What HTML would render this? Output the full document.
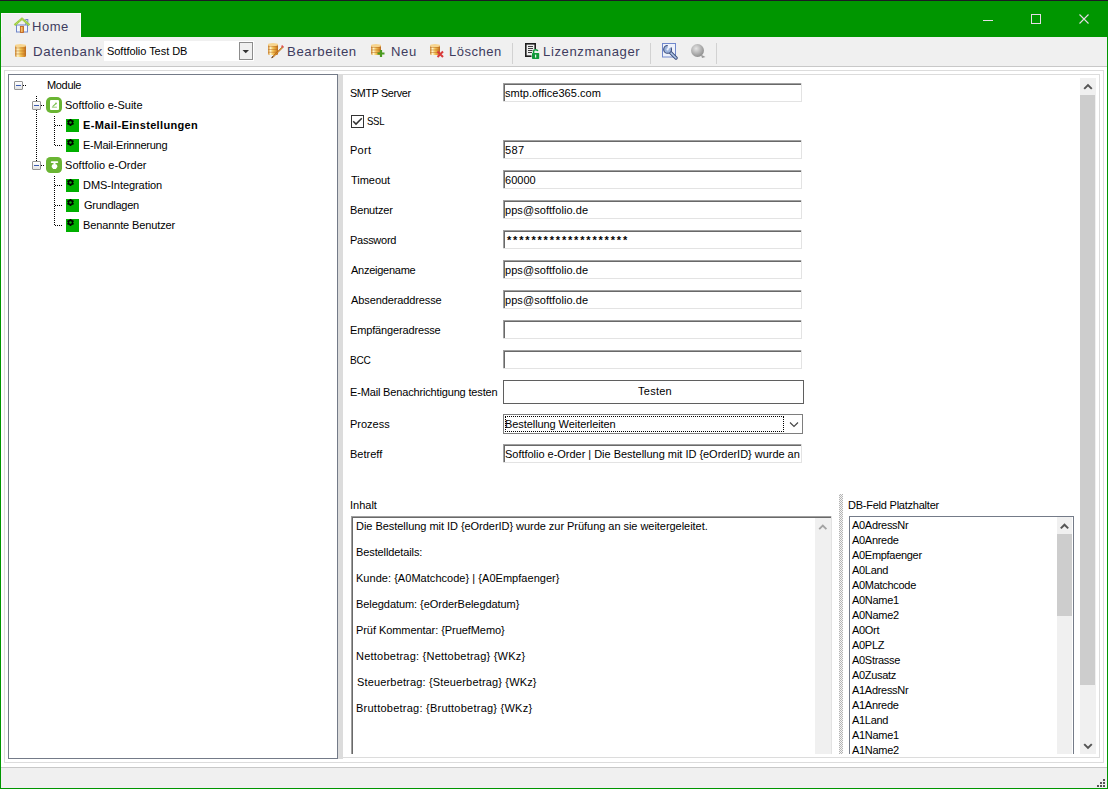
<!DOCTYPE html>
<html><head><meta charset="utf-8"><style>
html,body{margin:0;padding:0;width:1108px;height:789px;overflow:hidden;background:#fff}
body{position:relative;font-family:"Liberation Sans",sans-serif}
div,span,svg{position:absolute;display:block}
span{white-space:pre}
</style></head><body>
<div style="left:0px;top:0px;width:1108px;height:789px;background:#ffffff"></div>
<div style="left:0px;top:0px;width:1108px;height:37px;background:#009600"></div>
<div style="left:0px;top:0px;width:1108px;height:1px;background:#1d1b24"></div>
<div style="left:0px;top:37px;width:1px;height:752px;background:#009600"></div>
<div style="left:1107px;top:37px;width:1px;height:752px;background:#009600"></div>
<div style="left:0px;top:788px;width:1108px;height:1px;background:#009600"></div>
<div style="left:1px;top:13px;width:80px;height:24px;background:#f0f0f0;box-shadow:inset 1px 1px 0 #fbf7fb, inset -1px 0 0 #fbf7fb"></div>
<div style="left:983px;top:20px;width:10px;height:1px;background:#e6dce6"></div>
<div style="left:1031px;top:14px;width:10px;height:10px;box-sizing:border-box;border:1px solid #e6dce6"></div>
<svg style="left:1079px;top:14px" width="10" height="10" viewBox="0 0 10 10"><path d="M0.5,0.5 L9.5,9.5 M9.5,0.5 L0.5,9.5" stroke="#e6dce6" stroke-width="1.1"/></svg>
<div style="left:1px;top:37px;width:1106px;height:29px;background:#f0f0f0"></div>
<div style="left:1px;top:66px;width:1106px;height:1px;background:#c8c8c8"></div>
<div style="left:1px;top:767px;width:1106px;height:1px;background:#c8c8c8"></div>
<div style="left:1px;top:768px;width:1106px;height:20px;background:#f0f0f0"></div>
<div style="left:4px;top:70px;width:1100px;height:1px;background:#dcdcdc"></div>
<div style="left:4px;top:762px;width:1100px;height:1px;background:#dcdcdc"></div>
<div style="left:4px;top:70px;width:1px;height:693px;background:#dcdcdc"></div>
<div style="left:1103px;top:70px;width:1px;height:693px;background:#dcdcdc"></div>
<div style="left:8px;top:74px;width:330px;height:1px;background:#747b88"></div>
<div style="left:8px;top:758px;width:330px;height:1px;background:#747b88"></div>
<div style="left:8px;top:74px;width:1px;height:685px;background:#747b88"></div>
<div style="left:337px;top:74px;width:1px;height:685px;background:#747b88"></div>
<div style="left:338px;top:74px;width:5px;height:685px;background:#dcdcdc"></div>
<div style="left:343px;top:74px;width:757px;height:1px;background:#dcdcdc"></div>
<div style="left:343px;top:757px;width:757px;height:1px;background:#dcdcdc"></div>
<div style="left:1099px;top:74px;width:1px;height:684px;background:#dcdcdc"></div>
<div style="left:104px;top:41px;width:150px;height:20px;background:#ffffff"></div>
<div style="left:239px;top:42px;width:14px;height:18px;box-sizing:border-box;border:1px solid #8c8c8c;background:#f0f0f0"></div>
<svg style="left:242px;top:49px" width="8" height="5" viewBox="0 0 8 5"><path d="M0.5,1 L7,1 L3.75,4.2 Z" fill="#333"/></svg>
<div style="left:512px;top:43px;width:1px;height:21px;background:#d2d2d2"></div>
<div style="left:650px;top:43px;width:1px;height:21px;background:#d2d2d2"></div>
<div style="left:716px;top:43px;width:1px;height:21px;background:#d2d2d2"></div>
<div style="left:14px;top:81px;width:9px;height:9px;box-sizing:border-box;border:1px solid #959595;border-radius:1px;background:linear-gradient(#ffffff,#e4e4e4)"></div>
<div style="left:16px;top:85px;width:5px;height:1px;background:#3c5cb4"></div>
<div style="left:23px;top:85px;width:1px;height:1px;background:#000"></div>
<div style="left:25px;top:85px;width:1px;height:1px;background:#000"></div>
<div style="left:36px;top:96px;width:1px;height:1px;background:#000"></div>
<div style="left:36px;top:98px;width:1px;height:1px;background:#000"></div>
<div style="left:36px;top:100px;width:1px;height:1px;background:#000"></div>
<div style="left:32px;top:101px;width:9px;height:9px;box-sizing:border-box;border:1px solid #959595;border-radius:1px;background:linear-gradient(#ffffff,#e4e4e4)"></div>
<div style="left:34px;top:105px;width:5px;height:1px;background:#3c5cb4"></div>
<div style="left:41px;top:105px;width:1px;height:1px;background:#000"></div>
<div style="left:43px;top:105px;width:1px;height:1px;background:#000"></div>
<div style="left:36px;top:110px;width:1px;height:1px;background:#000"></div>
<div style="left:36px;top:112px;width:1px;height:1px;background:#000"></div>
<div style="left:36px;top:114px;width:1px;height:1px;background:#000"></div>
<div style="left:36px;top:116px;width:1px;height:1px;background:#000"></div>
<div style="left:36px;top:118px;width:1px;height:1px;background:#000"></div>
<div style="left:36px;top:120px;width:1px;height:1px;background:#000"></div>
<div style="left:36px;top:122px;width:1px;height:1px;background:#000"></div>
<div style="left:36px;top:124px;width:1px;height:1px;background:#000"></div>
<div style="left:36px;top:126px;width:1px;height:1px;background:#000"></div>
<div style="left:36px;top:128px;width:1px;height:1px;background:#000"></div>
<div style="left:36px;top:130px;width:1px;height:1px;background:#000"></div>
<div style="left:36px;top:132px;width:1px;height:1px;background:#000"></div>
<div style="left:36px;top:134px;width:1px;height:1px;background:#000"></div>
<div style="left:36px;top:136px;width:1px;height:1px;background:#000"></div>
<div style="left:36px;top:138px;width:1px;height:1px;background:#000"></div>
<div style="left:36px;top:140px;width:1px;height:1px;background:#000"></div>
<div style="left:36px;top:142px;width:1px;height:1px;background:#000"></div>
<div style="left:36px;top:144px;width:1px;height:1px;background:#000"></div>
<div style="left:36px;top:146px;width:1px;height:1px;background:#000"></div>
<div style="left:36px;top:148px;width:1px;height:1px;background:#000"></div>
<div style="left:36px;top:150px;width:1px;height:1px;background:#000"></div>
<div style="left:36px;top:152px;width:1px;height:1px;background:#000"></div>
<div style="left:36px;top:154px;width:1px;height:1px;background:#000"></div>
<div style="left:36px;top:156px;width:1px;height:1px;background:#000"></div>
<div style="left:36px;top:158px;width:1px;height:1px;background:#000"></div>
<div style="left:36px;top:160px;width:1px;height:1px;background:#000"></div>
<div style="left:32px;top:161px;width:9px;height:9px;box-sizing:border-box;border:1px solid #959595;border-radius:1px;background:linear-gradient(#ffffff,#e4e4e4)"></div>
<div style="left:34px;top:165px;width:5px;height:1px;background:#3c5cb4"></div>
<div style="left:41px;top:165px;width:1px;height:1px;background:#000"></div>
<div style="left:43px;top:165px;width:1px;height:1px;background:#000"></div>
<svg style="left:46px;top:97px" width="16" height="16" viewBox="0 0 16 16"><rect x="0" y="0" width="16" height="16" rx="5" fill="#6ab533"/><rect x="4" y="3" width="9" height="10" rx="1" fill="#fff"/><rect x="5.9" y="9.6" width="5" height="1.3" fill="#b0da94"/><path d="M6.6,9.6 L9.8,6.6" stroke="#7cc050" stroke-width="1.1"/><circle cx="10" cy="6.4" r="0.9" fill="#7cc050"/></svg>
<svg style="left:46px;top:157px" width="16" height="16" viewBox="0 0 16 16"><rect x="0" y="0" width="16" height="16" rx="4.5" fill="#6ab533"/><rect x="4.8" y="4.3" width="7.4" height="1.7" rx="0.8" fill="#fff"/><rect x="7.5" y="5.5" width="2" height="2" fill="#fff"/><ellipse cx="8.5" cy="9.2" rx="2.8" ry="2.3" fill="#fff"/><rect x="6.9" y="9.5" width="3.2" height="2.5" fill="#fff"/></svg>
<div style="left:54px;top:116px;width:1px;height:1px;background:#000"></div>
<div style="left:54px;top:118px;width:1px;height:1px;background:#000"></div>
<div style="left:54px;top:120px;width:1px;height:1px;background:#000"></div>
<div style="left:54px;top:122px;width:1px;height:1px;background:#000"></div>
<div style="left:54px;top:124px;width:1px;height:1px;background:#000"></div>
<div style="left:54px;top:126px;width:1px;height:1px;background:#000"></div>
<div style="left:54px;top:128px;width:1px;height:1px;background:#000"></div>
<div style="left:54px;top:130px;width:1px;height:1px;background:#000"></div>
<div style="left:54px;top:132px;width:1px;height:1px;background:#000"></div>
<div style="left:54px;top:134px;width:1px;height:1px;background:#000"></div>
<div style="left:54px;top:136px;width:1px;height:1px;background:#000"></div>
<div style="left:54px;top:138px;width:1px;height:1px;background:#000"></div>
<div style="left:54px;top:140px;width:1px;height:1px;background:#000"></div>
<div style="left:54px;top:142px;width:1px;height:1px;background:#000"></div>
<div style="left:54px;top:144px;width:1px;height:1px;background:#000"></div>
<div style="left:55px;top:125px;width:1px;height:1px;background:#000"></div>
<div style="left:57px;top:125px;width:1px;height:1px;background:#000"></div>
<div style="left:59px;top:125px;width:1px;height:1px;background:#000"></div>
<div style="left:61px;top:125px;width:1px;height:1px;background:#000"></div>
<svg style="left:66px;top:119px" width="13" height="13" viewBox="0 0 13 13"><rect width="13" height="13" fill="#00b000"/><g transform="translate(4.5,3.5)" fill="#000"><circle r="2.7"/><rect x="-0.9" y="-3.5" width="1.8" height="7"/><rect x="-0.9" y="-3.5" width="1.8" height="7" transform="rotate(60)"/><rect x="-0.9" y="-3.5" width="1.8" height="7" transform="rotate(120)"/><circle r="1.2" fill="#00b000"/></g></svg>
<div style="left:55px;top:145px;width:1px;height:1px;background:#000"></div>
<div style="left:57px;top:145px;width:1px;height:1px;background:#000"></div>
<div style="left:59px;top:145px;width:1px;height:1px;background:#000"></div>
<div style="left:61px;top:145px;width:1px;height:1px;background:#000"></div>
<svg style="left:66px;top:139px" width="13" height="13" viewBox="0 0 13 13"><rect width="13" height="13" fill="#00b000"/><g transform="translate(4.5,3.5)" fill="#000"><circle r="2.7"/><rect x="-0.9" y="-3.5" width="1.8" height="7"/><rect x="-0.9" y="-3.5" width="1.8" height="7" transform="rotate(60)"/><rect x="-0.9" y="-3.5" width="1.8" height="7" transform="rotate(120)"/><circle r="1.2" fill="#00b000"/></g></svg>
<div style="left:54px;top:176px;width:1px;height:1px;background:#000"></div>
<div style="left:54px;top:178px;width:1px;height:1px;background:#000"></div>
<div style="left:54px;top:180px;width:1px;height:1px;background:#000"></div>
<div style="left:54px;top:182px;width:1px;height:1px;background:#000"></div>
<div style="left:54px;top:184px;width:1px;height:1px;background:#000"></div>
<div style="left:54px;top:186px;width:1px;height:1px;background:#000"></div>
<div style="left:54px;top:188px;width:1px;height:1px;background:#000"></div>
<div style="left:54px;top:190px;width:1px;height:1px;background:#000"></div>
<div style="left:54px;top:192px;width:1px;height:1px;background:#000"></div>
<div style="left:54px;top:194px;width:1px;height:1px;background:#000"></div>
<div style="left:54px;top:196px;width:1px;height:1px;background:#000"></div>
<div style="left:54px;top:198px;width:1px;height:1px;background:#000"></div>
<div style="left:54px;top:200px;width:1px;height:1px;background:#000"></div>
<div style="left:54px;top:202px;width:1px;height:1px;background:#000"></div>
<div style="left:54px;top:204px;width:1px;height:1px;background:#000"></div>
<div style="left:54px;top:206px;width:1px;height:1px;background:#000"></div>
<div style="left:54px;top:208px;width:1px;height:1px;background:#000"></div>
<div style="left:54px;top:210px;width:1px;height:1px;background:#000"></div>
<div style="left:54px;top:212px;width:1px;height:1px;background:#000"></div>
<div style="left:54px;top:214px;width:1px;height:1px;background:#000"></div>
<div style="left:54px;top:216px;width:1px;height:1px;background:#000"></div>
<div style="left:54px;top:218px;width:1px;height:1px;background:#000"></div>
<div style="left:54px;top:220px;width:1px;height:1px;background:#000"></div>
<div style="left:54px;top:222px;width:1px;height:1px;background:#000"></div>
<div style="left:54px;top:224px;width:1px;height:1px;background:#000"></div>
<div style="left:55px;top:185px;width:1px;height:1px;background:#000"></div>
<div style="left:57px;top:185px;width:1px;height:1px;background:#000"></div>
<div style="left:59px;top:185px;width:1px;height:1px;background:#000"></div>
<div style="left:61px;top:185px;width:1px;height:1px;background:#000"></div>
<svg style="left:66px;top:179px" width="13" height="13" viewBox="0 0 13 13"><rect width="13" height="13" fill="#00b000"/><g transform="translate(4.5,3.5)" fill="#000"><circle r="2.7"/><rect x="-0.9" y="-3.5" width="1.8" height="7"/><rect x="-0.9" y="-3.5" width="1.8" height="7" transform="rotate(60)"/><rect x="-0.9" y="-3.5" width="1.8" height="7" transform="rotate(120)"/><circle r="1.2" fill="#00b000"/></g></svg>
<div style="left:55px;top:205px;width:1px;height:1px;background:#000"></div>
<div style="left:57px;top:205px;width:1px;height:1px;background:#000"></div>
<div style="left:59px;top:205px;width:1px;height:1px;background:#000"></div>
<div style="left:61px;top:205px;width:1px;height:1px;background:#000"></div>
<svg style="left:66px;top:199px" width="13" height="13" viewBox="0 0 13 13"><rect width="13" height="13" fill="#00b000"/><g transform="translate(4.5,3.5)" fill="#000"><circle r="2.7"/><rect x="-0.9" y="-3.5" width="1.8" height="7"/><rect x="-0.9" y="-3.5" width="1.8" height="7" transform="rotate(60)"/><rect x="-0.9" y="-3.5" width="1.8" height="7" transform="rotate(120)"/><circle r="1.2" fill="#00b000"/></g></svg>
<div style="left:55px;top:225px;width:1px;height:1px;background:#000"></div>
<div style="left:57px;top:225px;width:1px;height:1px;background:#000"></div>
<div style="left:59px;top:225px;width:1px;height:1px;background:#000"></div>
<div style="left:61px;top:225px;width:1px;height:1px;background:#000"></div>
<svg style="left:66px;top:219px" width="13" height="13" viewBox="0 0 13 13"><rect width="13" height="13" fill="#00b000"/><g transform="translate(4.5,3.5)" fill="#000"><circle r="2.7"/><rect x="-0.9" y="-3.5" width="1.8" height="7"/><rect x="-0.9" y="-3.5" width="1.8" height="7" transform="rotate(60)"/><rect x="-0.9" y="-3.5" width="1.8" height="7" transform="rotate(120)"/><circle r="1.2" fill="#00b000"/></g></svg>
<div style="left:503px;top:83px;width:299px;height:19px;background:#fff"></div>
<div style="left:503px;top:83px;width:299px;height:1px;background:#a0a0a0"></div>
<div style="left:503px;top:83px;width:1px;height:19px;background:#a0a0a0"></div>
<div style="left:504px;top:84px;width:297px;height:1px;background:#696969"></div>
<div style="left:504px;top:84px;width:1px;height:17px;background:#696969"></div>
<div style="left:503px;top:101px;width:299px;height:1px;background:#e3e3e3"></div>
<div style="left:801px;top:83px;width:1px;height:19px;background:#e3e3e3"></div>
<div style="left:351px;top:115px;width:13px;height:13px;box-sizing:border-box;border:1px solid #333;background:#fff"></div>
<svg style="left:351px;top:115px" width="13" height="13" viewBox="0 0 13 13"><path d="M2.2,6.3 L5,9.1 L10.8,3.3" stroke="#333" stroke-width="1.5" fill="none"/></svg>
<div style="left:503px;top:140px;width:299px;height:19px;background:#fff"></div>
<div style="left:503px;top:140px;width:299px;height:1px;background:#a0a0a0"></div>
<div style="left:503px;top:140px;width:1px;height:19px;background:#a0a0a0"></div>
<div style="left:504px;top:141px;width:297px;height:1px;background:#696969"></div>
<div style="left:504px;top:141px;width:1px;height:17px;background:#696969"></div>
<div style="left:503px;top:158px;width:299px;height:1px;background:#e3e3e3"></div>
<div style="left:801px;top:140px;width:1px;height:19px;background:#e3e3e3"></div>
<div style="left:503px;top:170px;width:299px;height:19px;background:#fff"></div>
<div style="left:503px;top:170px;width:299px;height:1px;background:#a0a0a0"></div>
<div style="left:503px;top:170px;width:1px;height:19px;background:#a0a0a0"></div>
<div style="left:504px;top:171px;width:297px;height:1px;background:#696969"></div>
<div style="left:504px;top:171px;width:1px;height:17px;background:#696969"></div>
<div style="left:503px;top:188px;width:299px;height:1px;background:#e3e3e3"></div>
<div style="left:801px;top:170px;width:1px;height:19px;background:#e3e3e3"></div>
<div style="left:503px;top:200px;width:299px;height:19px;background:#fff"></div>
<div style="left:503px;top:200px;width:299px;height:1px;background:#a0a0a0"></div>
<div style="left:503px;top:200px;width:1px;height:19px;background:#a0a0a0"></div>
<div style="left:504px;top:201px;width:297px;height:1px;background:#696969"></div>
<div style="left:504px;top:201px;width:1px;height:17px;background:#696969"></div>
<div style="left:503px;top:218px;width:299px;height:1px;background:#e3e3e3"></div>
<div style="left:801px;top:200px;width:1px;height:19px;background:#e3e3e3"></div>
<div style="left:503px;top:230px;width:299px;height:19px;background:#fff"></div>
<div style="left:503px;top:230px;width:299px;height:1px;background:#a0a0a0"></div>
<div style="left:503px;top:230px;width:1px;height:19px;background:#a0a0a0"></div>
<div style="left:504px;top:231px;width:297px;height:1px;background:#696969"></div>
<div style="left:504px;top:231px;width:1px;height:17px;background:#696969"></div>
<div style="left:503px;top:248px;width:299px;height:1px;background:#e3e3e3"></div>
<div style="left:801px;top:230px;width:1px;height:19px;background:#e3e3e3"></div>
<div style="left:503px;top:260px;width:299px;height:19px;background:#fff"></div>
<div style="left:503px;top:260px;width:299px;height:1px;background:#a0a0a0"></div>
<div style="left:503px;top:260px;width:1px;height:19px;background:#a0a0a0"></div>
<div style="left:504px;top:261px;width:297px;height:1px;background:#696969"></div>
<div style="left:504px;top:261px;width:1px;height:17px;background:#696969"></div>
<div style="left:503px;top:278px;width:299px;height:1px;background:#e3e3e3"></div>
<div style="left:801px;top:260px;width:1px;height:19px;background:#e3e3e3"></div>
<div style="left:503px;top:290px;width:299px;height:19px;background:#fff"></div>
<div style="left:503px;top:290px;width:299px;height:1px;background:#a0a0a0"></div>
<div style="left:503px;top:290px;width:1px;height:19px;background:#a0a0a0"></div>
<div style="left:504px;top:291px;width:297px;height:1px;background:#696969"></div>
<div style="left:504px;top:291px;width:1px;height:17px;background:#696969"></div>
<div style="left:503px;top:308px;width:299px;height:1px;background:#e3e3e3"></div>
<div style="left:801px;top:290px;width:1px;height:19px;background:#e3e3e3"></div>
<div style="left:503px;top:320px;width:299px;height:19px;background:#fff"></div>
<div style="left:503px;top:320px;width:299px;height:1px;background:#a0a0a0"></div>
<div style="left:503px;top:320px;width:1px;height:19px;background:#a0a0a0"></div>
<div style="left:504px;top:321px;width:297px;height:1px;background:#696969"></div>
<div style="left:504px;top:321px;width:1px;height:17px;background:#696969"></div>
<div style="left:503px;top:338px;width:299px;height:1px;background:#e3e3e3"></div>
<div style="left:801px;top:320px;width:1px;height:19px;background:#e3e3e3"></div>
<div style="left:503px;top:350px;width:299px;height:19px;background:#fff"></div>
<div style="left:503px;top:350px;width:299px;height:1px;background:#a0a0a0"></div>
<div style="left:503px;top:350px;width:1px;height:19px;background:#a0a0a0"></div>
<div style="left:504px;top:351px;width:297px;height:1px;background:#696969"></div>
<div style="left:504px;top:351px;width:1px;height:17px;background:#696969"></div>
<div style="left:503px;top:368px;width:299px;height:1px;background:#e3e3e3"></div>
<div style="left:801px;top:350px;width:1px;height:19px;background:#e3e3e3"></div>
<div style="left:503px;top:380px;width:301px;height:24px;box-sizing:border-box;border:1px solid #5f5f5f;background:#fff"></div>
<div style="left:503px;top:414px;width:300px;height:20px;box-sizing:border-box;border:1px solid #7e7e7e;background:#fff"></div>
<div style="left:505px;top:416px;width:279px;height:16px;box-sizing:border-box;border:1px dotted #000"></div>
<svg style="left:789px;top:421px" width="10" height="7" viewBox="0 0 10 7"><path d="M1,1.5 L5,5.5 L9,1.5" stroke="#444" stroke-width="1.1" fill="none"/></svg>
<div style="left:503px;top:444px;width:299px;height:19px;background:#fff"></div>
<div style="left:503px;top:444px;width:299px;height:1px;background:#a0a0a0"></div>
<div style="left:503px;top:444px;width:1px;height:19px;background:#a0a0a0"></div>
<div style="left:504px;top:445px;width:297px;height:1px;background:#696969"></div>
<div style="left:504px;top:445px;width:1px;height:17px;background:#696969"></div>
<div style="left:503px;top:462px;width:299px;height:1px;background:#e3e3e3"></div>
<div style="left:801px;top:444px;width:1px;height:19px;background:#e3e3e3"></div>
<div style="left:351px;top:516px;width:481px;height:238px;background:#fff"></div>
<div style="left:351px;top:516px;width:481px;height:1px;background:#a0a0a0"></div>
<div style="left:351px;top:516px;width:1px;height:238px;background:#a0a0a0"></div>
<div style="left:352px;top:517px;width:479px;height:1px;background:#696969"></div>
<div style="left:352px;top:517px;width:1px;height:237px;background:#696969"></div>
<div style="left:831px;top:516px;width:1px;height:238px;background:#e3e3e3"></div>
<div style="left:815px;top:518px;width:16px;height:236px;background:#f0f0f0"></div>
<svg style="left:818px;top:523px" width="10" height="8" viewBox="0 0 10 8"><path d="M1.2,6.2 L4.8,2.6 L8.4,6.2" stroke="#a3a3a3" stroke-width="1.8" fill="none"/></svg>
<div style="left:839px;top:494px;width:4px;height:260px;background-image:repeating-conic-gradient(#b4b4b4 0 25%, #f4f4f4 0 50%);background-size:2px 2px"></div>
<div style="left:849px;top:516px;width:225px;height:238px;background:#fff"></div>
<div style="left:849px;top:516px;width:225px;height:1px;background:#747b88"></div>
<div style="left:849px;top:516px;width:1px;height:238px;background:#747b88"></div>
<div style="left:1073px;top:516px;width:1px;height:238px;background:#747b88"></div>
<div style="left:1057px;top:517px;width:15px;height:237px;background:#f0f0f0"></div>
<div style="left:1057px;top:534px;width:15px;height:82px;background:#cdcdcd"></div>
<svg style="left:1059px;top:522px" width="11" height="8" viewBox="0 0 11 8"><path d="M1.8,6.4 L5.5,2.7 L9.2,6.4" stroke="#555" stroke-width="2" fill="none"/></svg>
<div style="left:1080px;top:78px;width:16px;height:676px;background:#f0f0f0"></div>
<div style="left:1080px;top:95px;width:15px;height:590px;background:#cdcdcd"></div>
<svg style="left:1082px;top:81px" width="12" height="10" viewBox="0 0 12 10"><path d="M2.2,7.9 L6,4.1 L9.8,7.9" stroke="#555" stroke-width="2" fill="none"/></svg>
<svg style="left:1082px;top:741px" width="12" height="10" viewBox="0 0 12 10"><path d="M2.2,3.1 L6,6.9 L9.8,3.1" stroke="#555" stroke-width="2" fill="none"/></svg>
<div style="left:1103px;top:779px;width:2px;height:2px;background:#555"></div>
<div style="left:1100px;top:782px;width:2px;height:2px;background:#555"></div>
<div style="left:1103px;top:782px;width:2px;height:2px;background:#555"></div>
<div style="left:1097px;top:785px;width:2px;height:2px;background:#555"></div>
<div style="left:1100px;top:785px;width:2px;height:2px;background:#555"></div>
<div style="left:1103px;top:785px;width:2px;height:2px;background:#555"></div>
<svg style="left:13px;top:17px" width="18" height="18" viewBox="0 0 18 18"><defs><linearGradient id="door" x1="0" x2="1"><stop offset="0" stop-color="#fbd88a"/><stop offset="1" stop-color="#e0902e"/></linearGradient></defs><rect x="12.8" y="2.5" width="2" height="6" fill="#eef2fb" stroke="#6f86c8" stroke-width="1"/><rect x="3.5" y="8" width="11" height="7" fill="#f2f6fd" stroke="#6f86c8" stroke-width="1"/><rect x="7.4" y="9.4" width="3" height="6" fill="url(#door)" stroke="#c0601a" stroke-width="0.9"/><path d="M1.5,8.2 L9,1.6 L16.5,8.2" stroke="#9ccc3c" stroke-width="2.2" fill="none"/><path d="M1.5,8.2 L9,1.6 L16.5,8.2" stroke="#d8f0a0" stroke-width="0.6" stroke-dasharray="1 1" fill="none"/></svg>
<svg style="left:15px;top:44px" width="11" height="14" viewBox="0 0 11 14"><defs><linearGradient id="gold0" x1="0" x2="1"><stop offset="0" stop-color="#d08a30"/><stop offset="0.25" stop-color="#fff4c8"/><stop offset="0.5" stop-color="#f2c458"/><stop offset="0.8" stop-color="#dc9430"/><stop offset="1" stop-color="#b86a20"/></linearGradient></defs><rect x="0" y="1" width="11" height="12" rx="1.5" fill="url(#gold0)"/><ellipse cx="5.5" cy="1.5" rx="5.5" ry="1.5" fill="#f7d590"/><rect x="0" y="3.5" width="11" height="0.9" fill="#b86a20" opacity="0.55"/><rect x="0" y="6.5" width="11" height="0.9" fill="#b86a20" opacity="0.55"/><rect x="0" y="9.5" width="11" height="0.9" fill="#b86a20" opacity="0.55"/></svg>
<svg style="left:268px;top:43px" width="16" height="16" viewBox="0 0 16 16"><defs><linearGradient id="gold1" x1="0" x2="1"><stop offset="0" stop-color="#d08a30"/><stop offset="0.25" stop-color="#fff4c8"/><stop offset="0.5" stop-color="#f2c458"/><stop offset="0.8" stop-color="#dc9430"/><stop offset="1" stop-color="#b86a20"/></linearGradient></defs><rect x="0" y="1" width="10" height="11" rx="1.5" fill="url(#gold1)"/><ellipse cx="5.0" cy="1.5" rx="5.0" ry="1.5" fill="#f7d590"/><rect x="0" y="3.2" width="10" height="0.9" fill="#b86a20" opacity="0.55"/><rect x="0" y="6.0" width="10" height="0.9" fill="#b86a20" opacity="0.55"/><rect x="0" y="8.8" width="10" height="0.9" fill="#b86a20" opacity="0.55"/><path d="M14.5,3.5 L5,13 L3.5,15 L5.5,14 L15,4.5 Z" fill="#f0a030" stroke="#a05a10" stroke-width="0.6"/><path d="M3.5,15 L4.5,13.2 L5.3,14 Z" fill="#223"/><path d="M13.6,2.6 L15.4,4.4" stroke="#e05050" stroke-width="1.5"/></svg>
<svg style="left:370px;top:44px" width="16" height="16" viewBox="0 0 16 16"><defs><linearGradient id="gold2" x1="0" x2="1"><stop offset="0" stop-color="#d08a30"/><stop offset="0.25" stop-color="#fff4c8"/><stop offset="0.5" stop-color="#f2c458"/><stop offset="0.8" stop-color="#dc9430"/><stop offset="1" stop-color="#b86a20"/></linearGradient></defs><rect x="1" y="1" width="10" height="10" rx="1.5" fill="url(#gold2)"/><ellipse cx="6.0" cy="1.5" rx="5.0" ry="1.5" fill="#f7d590"/><rect x="1" y="3.0" width="10" height="0.9" fill="#b86a20" opacity="0.55"/><rect x="1" y="5.5" width="10" height="0.9" fill="#b86a20" opacity="0.55"/><rect x="1" y="8.0" width="10" height="0.9" fill="#b86a20" opacity="0.55"/><path d="M11,6 L11,13 M7.5,9.5 L14.5,9.5" stroke="#4a9a20" stroke-width="2.2"/></svg>
<svg style="left:429px;top:44px" width="16" height="16" viewBox="0 0 16 16"><defs><linearGradient id="gold3" x1="0" x2="1"><stop offset="0" stop-color="#d08a30"/><stop offset="0.25" stop-color="#fff4c8"/><stop offset="0.5" stop-color="#f2c458"/><stop offset="0.8" stop-color="#dc9430"/><stop offset="1" stop-color="#b86a20"/></linearGradient></defs><rect x="1" y="1" width="10" height="10" rx="1.5" fill="url(#gold3)"/><ellipse cx="6.0" cy="1.5" rx="5.0" ry="1.5" fill="#f7d590"/><rect x="1" y="3.0" width="10" height="0.9" fill="#b86a20" opacity="0.55"/><rect x="1" y="5.5" width="10" height="0.9" fill="#b86a20" opacity="0.55"/><rect x="1" y="8.0" width="10" height="0.9" fill="#b86a20" opacity="0.55"/><path d="M8.5,7.5 L14,13 M14,7.5 L8.5,13" stroke="#d83a3a" stroke-width="2"/></svg>
<svg style="left:524px;top:43px" width="17" height="17" viewBox="0 0 17 17"><rect x="1" y="0" width="11" height="1.6" fill="#1e1e1e"/><rect x="1" y="0" width="1.6" height="14" fill="#1e1e1e"/><rect x="10.4" y="0" width="1.6" height="6" fill="#1e1e1e"/><rect x="1" y="12.4" width="6.5" height="1.6" fill="#1e1e1e"/><path d="M4,3.5 L9,3.5 M4,5.5 L9,5.5 M4,7.5 L8.5,7.5 M4,9.5 L8,9.5" stroke="#2a2a2a" stroke-width="0.9"/><path d="M9.6,10 L9.6,8.6 Q9.6,6.8 11.6,6.8 Q13.3,6.8 13.9,8" stroke="#11993a" stroke-width="1.5" fill="none"/><rect x="8" y="10" width="7.2" height="6" rx="0.7" fill="#11993a"/><rect x="11.1" y="11.6" width="1.1" height="3" fill="#fff"/></svg>
<svg style="left:662px;top:43px" width="17" height="17" viewBox="0 0 17 17"><rect x="0.5" y="0.5" width="13" height="13.5" fill="#eef2fb" stroke="#7088cc" stroke-width="1"/><path d="M7.5,8.5 L14,15" stroke="#3a4a78" stroke-width="3.4" stroke-linecap="round"/><path d="M7.5,8.5 L14,15" stroke="#b0c8e8" stroke-width="1.6" stroke-linecap="round"/><circle cx="5.6" cy="6.4" r="3.9" fill="#9cb4dc" stroke="#3a4a78" stroke-width="1.1"/><path d="M5.6,6.4 L5.8,1.2 L10.8,3.2 Z" fill="#eef2fb"/><circle cx="5.6" cy="6.4" r="1.1" fill="#eef2fb"/></svg>
<svg style="left:690px;top:43px" width="17" height="17" viewBox="0 0 17 17"><defs><radialGradient id="gl" cx="0.4" cy="0.35" r="0.7"><stop offset="0" stop-color="#e4e4e4"/><stop offset="1" stop-color="#8a8a8a"/></radialGradient></defs><circle cx="7.5" cy="7.5" r="6.5" fill="url(#gl)"/><path d="M10,11 L15.5,14 L12,15 L11,12 Z" fill="#9a9a9a"/></svg>
<span style="left:32.00px;top:20.00px;font-size:13px;line-height:13px;color:#3e3c5e;letter-spacing:0.508px">Home</span>
<span style="left:33.00px;top:45.00px;font-size:13px;line-height:13px;color:#3e3c5e;letter-spacing:0.600px;transform:scaleX(1.0225);transform-origin:0 0">Datenbank</span>
<span style="left:287.00px;top:45.00px;font-size:13px;line-height:13px;color:#3e3c5e;letter-spacing:0.600px;transform:scaleX(1.0135);transform-origin:0 0">Bearbeiten</span>
<span style="left:391.00px;top:45.00px;font-size:13px;line-height:13px;color:#3e3c5e;letter-spacing:0.600px;transform:scaleX(1.0061);transform-origin:0 0">Neu</span>
<span style="left:449.00px;top:45.00px;font-size:13px;line-height:13px;color:#3e3c5e;letter-spacing:0.508px">Löschen</span>
<span style="left:543.00px;top:45.00px;font-size:13px;line-height:13px;color:#3e3c5e;letter-spacing:0.600px;transform:scaleX(1.0064);transform-origin:0 0">Lizenzmanager</span>
<span style="left:107.00px;top:45.69px;font-size:11px;line-height:11px;color:#000;letter-spacing:-0.045px">Softfolio Test DB</span>
<span style="left:47.00px;top:79.69px;font-size:11px;line-height:11px;color:#000;letter-spacing:-0.336px">Module</span>
<span style="left:65.00px;top:99.69px;font-size:11px;line-height:11px;color:#000;letter-spacing:-0.010px">Softfolio e-Suite</span>
<span style="left:83.00px;top:119.69px;font-size:11px;line-height:11px;color:#000;letter-spacing:0.349px;font-weight:bold">E-Mail-Einstellungen</span>
<span style="left:83.00px;top:139.69px;font-size:11px;line-height:11px;color:#000;letter-spacing:-0.253px">E-Mail-Erinnerung</span>
<span style="left:65.00px;top:159.69px;font-size:11px;line-height:11px;color:#000;letter-spacing:0.050px">Softfolio e-Order</span>
<span style="left:83.00px;top:179.69px;font-size:11px;line-height:11px;color:#000;letter-spacing:-0.063px">DMS-Integration</span>
<span style="left:84.00px;top:199.69px;font-size:11px;line-height:11px;color:#000;letter-spacing:-0.254px">Grundlagen</span>
<span style="left:83.00px;top:219.69px;font-size:11px;line-height:11px;color:#000;letter-spacing:-0.124px">Benannte Benutzer</span>
<span style="left:350.00px;top:87.69px;font-size:11px;line-height:11px;color:#000;letter-spacing:-0.350px;transform:scaleX(0.9790);transform-origin:0 0">SMTP Server</span>
<span style="left:505.00px;top:87.69px;font-size:11px;line-height:11px;color:#000;letter-spacing:0.043px">smtp.office365.com</span>
<span style="left:367.00px;top:115.69px;font-size:11px;line-height:11px;color:#000;letter-spacing:-0.350px;transform:scaleX(0.8710);transform-origin:0 0">SSL</span>
<span style="left:350.00px;top:144.69px;font-size:11px;line-height:11px;color:#000;letter-spacing:0.275px">Port</span>
<span style="left:505.00px;top:144.69px;font-size:11px;line-height:11px;color:#000;letter-spacing:0.350px;transform:scaleX(1.0077);transform-origin:0 0">587</span>
<span style="left:351.00px;top:174.69px;font-size:11px;line-height:11px;color:#000;letter-spacing:-0.038px">Timeout</span>
<span style="left:505.00px;top:174.69px;font-size:11px;line-height:11px;color:#000;letter-spacing:0.028px">60000</span>
<span style="left:350.00px;top:204.69px;font-size:11px;line-height:11px;color:#000;letter-spacing:-0.161px">Benutzer</span>
<span style="left:505.00px;top:204.69px;font-size:11px;line-height:11px;color:#000;letter-spacing:0.060px">pps@softfolio.de</span>
<span style="left:350.00px;top:234.69px;font-size:11px;line-height:11px;color:#000;letter-spacing:-0.271px">Password</span>
<span style="left:507.00px;top:234.69px;font-size:11px;line-height:11px;color:#000;letter-spacing:1.820px;font-weight:bold">********************</span>
<span style="left:351.00px;top:264.69px;font-size:11px;line-height:11px;color:#000;letter-spacing:-0.257px">Anzeigename</span>
<span style="left:505.00px;top:264.69px;font-size:11px;line-height:11px;color:#000;letter-spacing:0.060px">pps@softfolio.de</span>
<span style="left:351.00px;top:294.69px;font-size:11px;line-height:11px;color:#000;letter-spacing:-0.109px">Absenderaddresse</span>
<span style="left:505.00px;top:294.69px;font-size:11px;line-height:11px;color:#000;letter-spacing:0.060px">pps@softfolio.de</span>
<span style="left:350.00px;top:324.69px;font-size:11px;line-height:11px;color:#000;letter-spacing:-0.149px">Empfängeradresse</span>
<span style="left:350.00px;top:354.69px;font-size:11px;line-height:11px;color:#000;letter-spacing:-0.350px;transform:scaleX(0.9190);transform-origin:0 0">BCC</span>
<span style="left:350.00px;top:386.69px;font-size:11px;line-height:11px;color:#000;letter-spacing:-0.160px">E-Mail Benachrichtigung testen</span>
<span style="left:638.00px;top:385.69px;font-size:11px;line-height:11px;color:#000;letter-spacing:0.258px">Testen</span>
<span style="left:350.00px;top:418.69px;font-size:11px;line-height:11px;color:#000;letter-spacing:0.000px">Prozess</span>
<span style="left:505.00px;top:418.69px;font-size:11px;line-height:11px;color:#000;letter-spacing:-0.073px">Bestellung Weiterleiten</span>
<span style="left:350.00px;top:448.69px;font-size:11px;line-height:11px;color:#000;letter-spacing:0.000px">Betreff</span>
<div style="left:505px;top:446px;width:295px;height:16px;overflow:hidden"><span style="left:0.00px;top:2.69px;font-size:11px;line-height:11px;color:#000;letter-spacing:-0.025px">Softfolio e-Order | Die Bestellung mit ID {eOrderID} wurde an</span></div>
<span style="left:350.00px;top:499.69px;font-size:11px;line-height:11px;color:#000;letter-spacing:0.000px">Inhalt</span>
<span style="left:356.00px;top:520.69px;font-size:11px;line-height:11px;color:#000;letter-spacing:-0.040px">Die Bestellung mit ID {eOrderID} wurde zur Prüfung an sie weitergeleitet.</span>
<span style="left:356.00px;top:546.69px;font-size:11px;line-height:11px;color:#000;letter-spacing:-0.105px">Bestelldetails:</span>
<span style="left:356.00px;top:572.69px;font-size:11px;line-height:11px;color:#000;letter-spacing:0.035px">Kunde: {A0Matchcode} | {A0Empfaenger}</span>
<span style="left:356.00px;top:598.69px;font-size:11px;line-height:11px;color:#000;letter-spacing:-0.059px">Belegdatum: {eOrderBelegdatum}</span>
<span style="left:356.00px;top:624.69px;font-size:11px;line-height:11px;color:#000;letter-spacing:-0.065px">Prüf Kommentar: {PruefMemo}</span>
<span style="left:356.00px;top:650.69px;font-size:11px;line-height:11px;color:#000;letter-spacing:0.231px">Nettobetrag: {Nettobetrag} {WKz}</span>
<span style="left:357.00px;top:676.69px;font-size:11px;line-height:11px;color:#000;letter-spacing:0.158px">Steuerbetrag: {Steuerbetrag} {WKz}</span>
<span style="left:356.00px;top:702.69px;font-size:11px;line-height:11px;color:#000;letter-spacing:0.241px">Bruttobetrag: {Bruttobetrag} {WKz}</span>
<span style="left:848.00px;top:499.69px;font-size:11px;line-height:11px;color:#000;letter-spacing:-0.232px">DB-Feld Platzhalter</span>
<span style="left:852.00px;top:519.69px;font-size:11px;line-height:11px;color:#000;letter-spacing:-0.300px">A0AdressNr</span>
<span style="left:852.00px;top:534.69px;font-size:11px;line-height:11px;color:#000;letter-spacing:-0.300px">A0Anrede</span>
<span style="left:852.00px;top:549.69px;font-size:11px;line-height:11px;color:#000;letter-spacing:-0.300px">A0Empfaenger</span>
<span style="left:852.00px;top:564.69px;font-size:11px;line-height:11px;color:#000;letter-spacing:-0.300px">A0Land</span>
<span style="left:852.00px;top:579.69px;font-size:11px;line-height:11px;color:#000;letter-spacing:-0.300px">A0Matchcode</span>
<span style="left:852.00px;top:594.69px;font-size:11px;line-height:11px;color:#000;letter-spacing:-0.300px">A0Name1</span>
<span style="left:852.00px;top:609.69px;font-size:11px;line-height:11px;color:#000;letter-spacing:-0.300px">A0Name2</span>
<span style="left:852.00px;top:624.69px;font-size:11px;line-height:11px;color:#000;letter-spacing:-0.300px">A0Ort</span>
<span style="left:852.00px;top:639.69px;font-size:11px;line-height:11px;color:#000;letter-spacing:-0.300px">A0PLZ</span>
<span style="left:852.00px;top:654.69px;font-size:11px;line-height:11px;color:#000;letter-spacing:-0.300px">A0Strasse</span>
<span style="left:852.00px;top:669.69px;font-size:11px;line-height:11px;color:#000;letter-spacing:-0.300px">A0Zusatz</span>
<span style="left:852.00px;top:684.69px;font-size:11px;line-height:11px;color:#000;letter-spacing:-0.300px">A1AdressNr</span>
<span style="left:852.00px;top:699.69px;font-size:11px;line-height:11px;color:#000;letter-spacing:-0.300px">A1Anrede</span>
<span style="left:852.00px;top:714.69px;font-size:11px;line-height:11px;color:#000;letter-spacing:-0.300px">A1Land</span>
<span style="left:852.00px;top:729.69px;font-size:11px;line-height:11px;color:#000;letter-spacing:-0.300px">A1Name1</span>
<span style="left:852.00px;top:744.69px;font-size:11px;line-height:11px;color:#000;letter-spacing:-0.300px">A1Name2</span>
</body></html>
